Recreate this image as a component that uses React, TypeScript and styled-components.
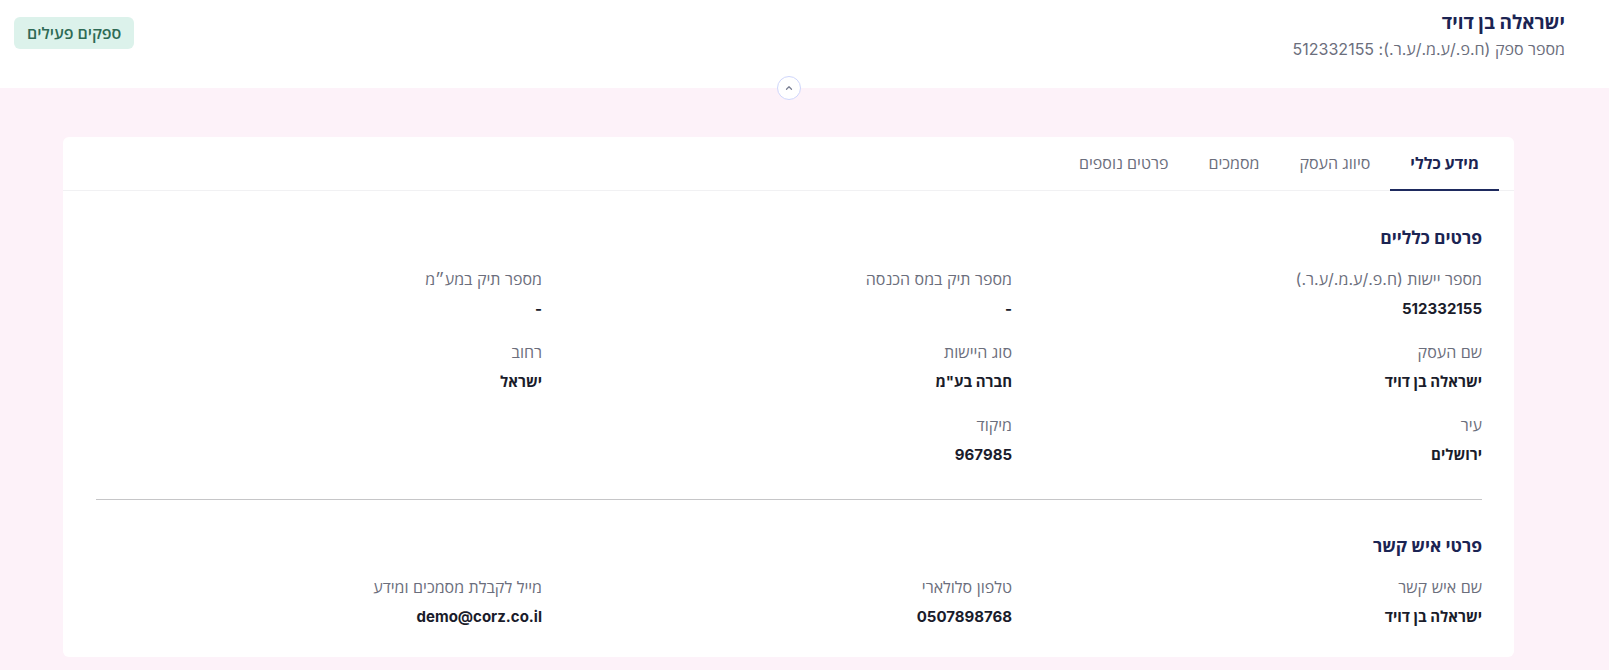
import React, { useState } from "react";
import styled, { createGlobalStyle } from "styled-components";

const GlobalStyle = createGlobalStyle`
  html, body {
    margin: 0;
    padding: 0;
    background: #fdf2f9;
  }
  body {
    font-family: Inter, "Open Sans", "Liberation Sans", sans-serif;
    direction: rtl;
  }
  * {
    box-sizing: border-box;
  }
`;

type Field = {
  label: string;
  value: string;
};

const generalFields: Field[] = [
  { label: "מספר יישות (ח.פ./ע.מ./ע.ר.)", value: "512332155" },
  { label: "מספר תיק במס הכנסה", value: "-" },
  { label: "מספר תיק במע״מ", value: "-" },
  { label: "שם העסק", value: "ישראלה בן דויד" },
  { label: "סוג היישות", value: 'חברה בע"מ' },
  { label: "רחוב", value: "ישראל" },
  { label: "עיר", value: "ירושלים" },
  { label: "מיקוד", value: "967985" },
];

const contactFields: Field[] = [
  { label: "שם איש קשר", value: "ישראלה בן דויד" },
  { label: "טלפון סלולארי", value: "0507898768" },
  { label: "מייל לקבלת מסמכים ומידע", value: "demo@corz.co.il" },
];

const tabs = ["מידע כללי", "סיווג העסק", "מסמכים", "פרטים נוספים"];

const Page = styled.div`
  min-height: 670px;
  background: #fdf2f9;
`;

const Header = styled.header`
  display: flex;
  justify-content: space-between;
  align-items: flex-start;
  height: 88px;
  padding: 11px 44px 0 14px;
  background: #ffffff;
`;

const SupplierInfo = styled.div`
  display: flex;
  flex-direction: column;
  gap: 3px;
`;

const SupplierName = styled.h1`
  margin: 0;
  font-size: 19px;
  line-height: 24px;
  font-weight: 700;
  color: #1b2453;
`;

const SupplierNumber = styled.p`
  margin: 0;
  font-size: 16px;
  line-height: 22px;
  color: #6b6e7c;
`;

const StatusBadge = styled.span`
  display: inline-flex;
  align-items: center;
  height: 32px;
  margin-top: 6px;
  padding: 0 13px;
  border-radius: 6px;
  background: #dcf2eb;
  color: #2e6a55;
  font-size: 16px;
  font-weight: 600;
`;

const Main = styled.main`
  position: relative;
  padding: 49px 95px 13px 63px;
`;

const CollapseButton = styled.button`
  position: absolute;
  top: 0;
  left: calc(63px + (100% - 158px) / 2);
  transform: translate(-50%, -50%);
  width: 24px;
  height: 24px;
  padding: 0;
  border-radius: 50%;
  border: 1px solid #cfd6fb;
  background: #ffffff;
  display: flex;
  align-items: center;
  justify-content: center;
  cursor: pointer;
`;

const Card = styled.section`
  background: #ffffff;
  border-radius: 6px;
`;

const TabBar = styled.nav`
  display: flex;
  height: 54px;
  padding: 0 15px;
  border-bottom: 1px solid #f1f1f3;
`;

const Tab = styled.button<{ $active: boolean }>`
  height: 54px;
  padding: 0 20px;
  border: none;
  border-bottom: 2px solid ${({ $active }) => ($active ? "#1e2a5e" : "transparent")};
  background: transparent;
  font-family: inherit;
  font-size: 16px;
  font-weight: ${({ $active }) => ($active ? 700 : 500)};
  color: ${({ $active }) => ($active ? "#1b2453" : "#6b6e7c")};
  margin-bottom: -1px;
  cursor: pointer;
`;

const CardBody = styled.div`
  padding: 35px 32px 30px 33px;
`;

const SectionTitle = styled.h2`
  margin: 0 0 19px;
  font-size: 17.5px;
  line-height: 24px;
  font-weight: 700;
  color: #1b2453;
`;

const FieldGrid = styled.div`
  display: grid;
  grid-template-columns: repeat(3, 1fr);
  column-gap: 24px;
  row-gap: 23px;
`;

const FieldItem = styled.div`
  display: flex;
  flex-direction: column;
  gap: 8px;
`;

const FieldLabel = styled.span`
  font-size: 16px;
  line-height: 21px;
  color: #6b6e7c;
`;

const FieldValue = styled.span`
  font-size: 15px;
  line-height: 21px;
  font-weight: 700;
  color: #1a1c2b;
`;

const Divider = styled.hr`
  margin: 34px 0;
  border: none;
  border-top: 1px solid #c6c6c8;
`;

function ChevronUp() {
  return (
    <svg width="10" height="10" viewBox="0 0 24 24" fill="none">
      <path
        d="M6 15l6-6 6 6"
        stroke="#7a7f93"
        strokeWidth="3"
        strokeLinecap="round"
        strokeLinejoin="round"
      />
    </svg>
  );
}

function FieldSection({ title, fields }: { title: string; fields: Field[] }) {
  return (
    <div>
      <SectionTitle>{title}</SectionTitle>
      <FieldGrid>
        {fields.map((field) => (
          <FieldItem key={field.label}>
            <FieldLabel>{field.label}</FieldLabel>
            <FieldValue>{field.value}</FieldValue>
          </FieldItem>
        ))}
      </FieldGrid>
    </div>
  );
}

export default function App() {
  const [activeTab, setActiveTab] = useState(0);

  return (
    <Page>
      <GlobalStyle />
      <Header>
        <SupplierInfo>
          <SupplierName>ישראלה בן דויד</SupplierName>
          <SupplierNumber>מספר ספק (ח.פ./ע.מ./ע.ר.): 512332155</SupplierNumber>
        </SupplierInfo>
        <StatusBadge>ספקים פעילים</StatusBadge>
      </Header>
      <Main>
        <CollapseButton aria-label="collapse">
          <ChevronUp />
        </CollapseButton>
        <Card>
          <TabBar>
            {tabs.map((tab, index) => (
              <Tab
                key={tab}
                $active={index === activeTab}
                onClick={() => setActiveTab(index)}
              >
                {tab}
              </Tab>
            ))}
          </TabBar>
          <CardBody>
            <FieldSection title="פרטים כלליים" fields={generalFields} />
            <Divider />
            <FieldSection title="פרטי איש קשר" fields={contactFields} />
          </CardBody>
        </Card>
      </Main>
    </Page>
  );
}
